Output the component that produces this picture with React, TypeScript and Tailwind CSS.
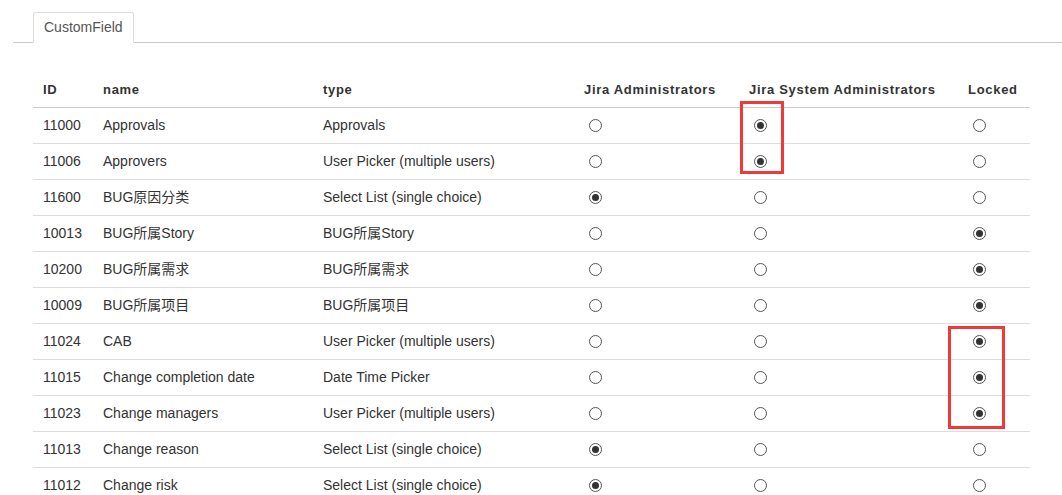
const ROWS: [string, string, string, number][] = [
  ['11000', 'Approvals', 'Approvals', 1],
  ['11006', 'Approvers', 'User Picker (multiple users)', 1],
  ['11600', 'BUG原因分类', 'Select List (single choice)', 0],
  ['10013', 'BUG所属Story', 'BUG所属Story', 2],
  ['10200', 'BUG所属需求', 'BUG所属需求', 2],
  ['10009', 'BUG所属项目', 'BUG所属项目', 2],
  ['11024', 'CAB', 'User Picker (multiple users)', 2],
  ['11015', 'Change completion date', 'Date Time Picker', 2],
  ['11023', 'Change managers', 'User Picker (multiple users)', 2],
  ['11013', 'Change reason', 'Select List (single choice)', 0],
  ['11012', 'Change risk', 'Select List (single choice)', 0],
];

function Radio({ on }: { on: boolean }) {
  return (
    <span className="inline-flex w-[13px] h-[13px] rounded-full border border-[#555] bg-white items-center justify-center">
      {on && <span className="w-[7px] h-[7px] rounded-full bg-[#333]" />}
    </span>
  );
}

export default function App() {
  return (
    <div
      className="relative w-[1062px] h-[495px] overflow-hidden bg-white text-[14px] text-[#333]"
      style={{ fontFamily: 'Arial, "Liberation Sans", "Noto Sans CJK SC", sans-serif' }}
    >
      <div className="flex ml-[13px] mt-[12px] border-b border-[#ccc] h-[31px]">
        <div className="ml-[20px] px-[10px] h-[31px] border border-[#ddd] border-b-white rounded-t-[3px] bg-white flex items-center text-[#555] -mb-px">
          CustomField
        </div>
      </div>
      <table className="ml-[33px] mt-[30px] w-[997px] border-collapse">
        <thead>
          <tr className="h-[34px] border-b border-[#ccc] text-[13px] tracking-[0.7px]">
            <th className="w-[60px] text-left pl-[10px] font-bold">ID</th>
            <th className="w-[220px] text-left pl-[10px] font-bold">name</th>
            <th className="w-[261px] text-left pl-[10px] font-bold">type</th>
            <th className="w-[165px] text-left pl-[10px] font-bold">Jira Administrators</th>
            <th className="w-[219px] text-left pl-[10px] font-bold">Jira System Administrators</th>
            <th className="text-left pl-[10px] font-bold">Locked</th>
          </tr>
        </thead>
        <tbody>
          {ROWS.map(([id, name, type, sel]) => (
            <tr key={id} className="h-[36px] border-b border-[#ddd]">
              <td className="pl-[10px]">{id}</td>
              <td className="pl-[10px]">{name}</td>
              <td className="pl-[10px]">{type}</td>
              {[0, 1, 2].map((i) => (
                <td key={i} className="pl-[15px] align-middle">
                  <span className="flex"><Radio on={sel === i} /></span>
                </td>
              ))}
            </tr>
          ))}
        </tbody>
      </table>
      <div className="absolute left-[740px] top-[101px] w-[44px] h-[73px] border-[3px] border-[#f03a3a]" />
      <div className="absolute left-[948px] top-[326px] w-[57px] h-[103px] border-[3px] border-[#f03a3a]" />
    </div>
  );
}
